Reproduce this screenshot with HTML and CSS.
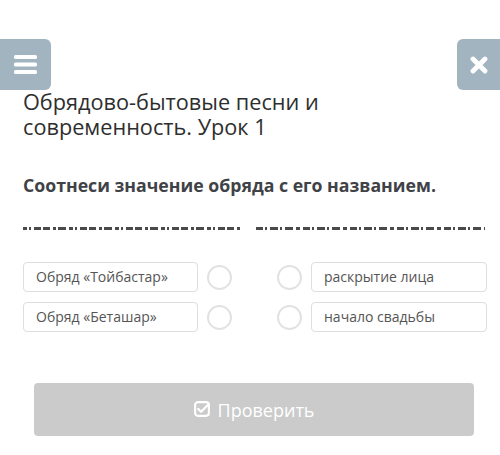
FILE: index.html
```html
<!DOCTYPE html>
<html lang="ru">
<head>
<meta charset="utf-8">
<link rel="stylesheet" href="styles.css">
</head>
<body>
<div class="page">
  <div class="topbar">
    <div class="btn-menu">
      <svg width="23" height="19" viewBox="0 0 23 19"><rect x="0" y="0" width="23" height="4" rx="1.5" fill="#fff"/><rect x="0" y="7.5" width="23" height="4" rx="1.5" fill="#fff"/><rect x="0" y="15" width="23" height="4" rx="1.5" fill="#fff"/></svg>
    </div>
    <div class="btn-close">
      <svg width="18" height="18" viewBox="0 0 18 18"><path d="M3 3 L15 15 M15 3 L3 15" stroke="#fff" stroke-width="4.8" stroke-linecap="round"/></svg>
    </div>
  </div>
  <h1 class="title"><span class="tline">Обрядово-бытовые песни и</span><span class="tline">современность. Урок 1</span></h1>
  <h2 class="task">Соотнеси значение обряда с его названием.</h2>
  <div class="hidden-line">
    <div class="dash dash-a"></div>
    <div class="dash dash-b"></div>
  </div>
  <div class="match">
    <div class="row">
      <div class="box">Обряд «Тойбастар»</div>
      <div class="dot"></div>
      <div class="gap"></div>
      <div class="dot"></div>
      <div class="box">раскрытие лица</div>
    </div>
    <div class="row">
      <div class="box">Обряд «Беташар»</div>
      <div class="dot"></div>
      <div class="gap"></div>
      <div class="dot"></div>
      <div class="box">начало свадьбы</div>
    </div>
  </div>
  <div class="check">
    <svg class="check-ico" width="16" height="16" viewBox="0 0 17 17"><rect x="1.2" y="1.2" width="14.6" height="14.6" rx="3" fill="none" stroke="#fff" stroke-width="2.2"/><path d="M4.5 8.5 L7.5 11.5 L15.5 3.5" fill="none" stroke="#fff" stroke-width="2.4" stroke-linecap="round" stroke-linejoin="round"/></svg>
    <span>Проверить</span>
  </div>
</div>
</body>
</html>
```
FILE: styles.css
```css
* { box-sizing: border-box; margin: 0; padding: 0; }
html, body { background: #fff; }
body { font-family: "Open Sans", "Noto Sans", sans-serif; color: #333; }
.page { width: 500px; height: 455px; padding-top: 39px; }
.topbar { display: flex; justify-content: space-between; height: 51px; }
.btn-menu {
  width: 51px; height: 51px; background: #a3b4c1;
  border-radius: 0 6px 6px 0;
  display: flex; align-items: center; justify-content: center;
}
.btn-close {
  width: 43px; height: 51px; background: #a3b4c1;
  border-radius: 6px 0 0 6px;
  display: flex; align-items: center; justify-content: center;
}
.title {
  display: flex; flex-direction: column;
  font-weight: 400; font-size: 21.7px; line-height: 25px;
  color: #2e2e2e; padding-left: 23px; margin-top: -1px; margin-bottom: -2px;
}
.tline { display: block; }
.task {
  font-weight: 700; font-size: 17.7px; line-height: 22px;
  color: #3f4347; padding-left: 23px; margin-top: 37px;
}
.hidden-line { display: flex; padding-left: 23px; margin-top: 31px; height: 4px; gap: 16px; }
.dash { height: 3px; }
.dash-a {
  width: 217px;
  background: repeating-linear-gradient(90deg,
    #4a4a4a 0 4px, transparent 4px 6px, #4a4a4a 6px 8px, transparent 8px 11px,
    #4a4a4a 11px 18px, transparent 18px 20px, #4a4a4a 20px 27px, transparent 27px 30px,
    #4a4a4a 30px 33px, transparent 33px 35px, #4a4a4a 35px 43px, transparent 43px 46px);
}
.dash-b {
  width: 229px;
  background: repeating-linear-gradient(90deg,
    #4a4a4a 0 7px, transparent 7px 9px, #4a4a4a 9px 11px, transparent 11px 14px,
    #4a4a4a 14px 22px, transparent 22px 24px, #4a4a4a 24px 26px, transparent 26px 29px,
    #4a4a4a 29px 37px, transparent 37px 40px, #4a4a4a 40px 44px, transparent 44px 47px);
}
.match { display: flex; flex-direction: column; gap: 10px; margin-top: 31px; padding-left: 23px; }
.row { display: flex; align-items: center; height: 30px; }
.box {
  width: 175px; height: 30px; border: 1px solid #dedede; border-radius: 4px;
  font-size: 14px; line-height: 28px; color: #555; padding-left: 12px;
}
.row .box:last-child { width: 176px; }
.dot {
  width: 25px; height: 25px; border: 2px solid #e2e2e2; border-radius: 50%;
  margin-left: 9px; margin-right: 9px; flex: none;
}
.row .dot:nth-child(4) { margin-left: 0; margin-right: 9px; }
.row .dot:nth-child(2) { margin-right: 0; }
.gap { width: 45px; }
.check {
  margin: 51px 0 0 34px; width: 440px; height: 53px; background: #cbcbcb;
  border-radius: 4px; display: flex; align-items: center; justify-content: center;
  gap: 8px; color: #fff; font-size: 18px;
}
.check-ico { margin-top: -2px; }
```
